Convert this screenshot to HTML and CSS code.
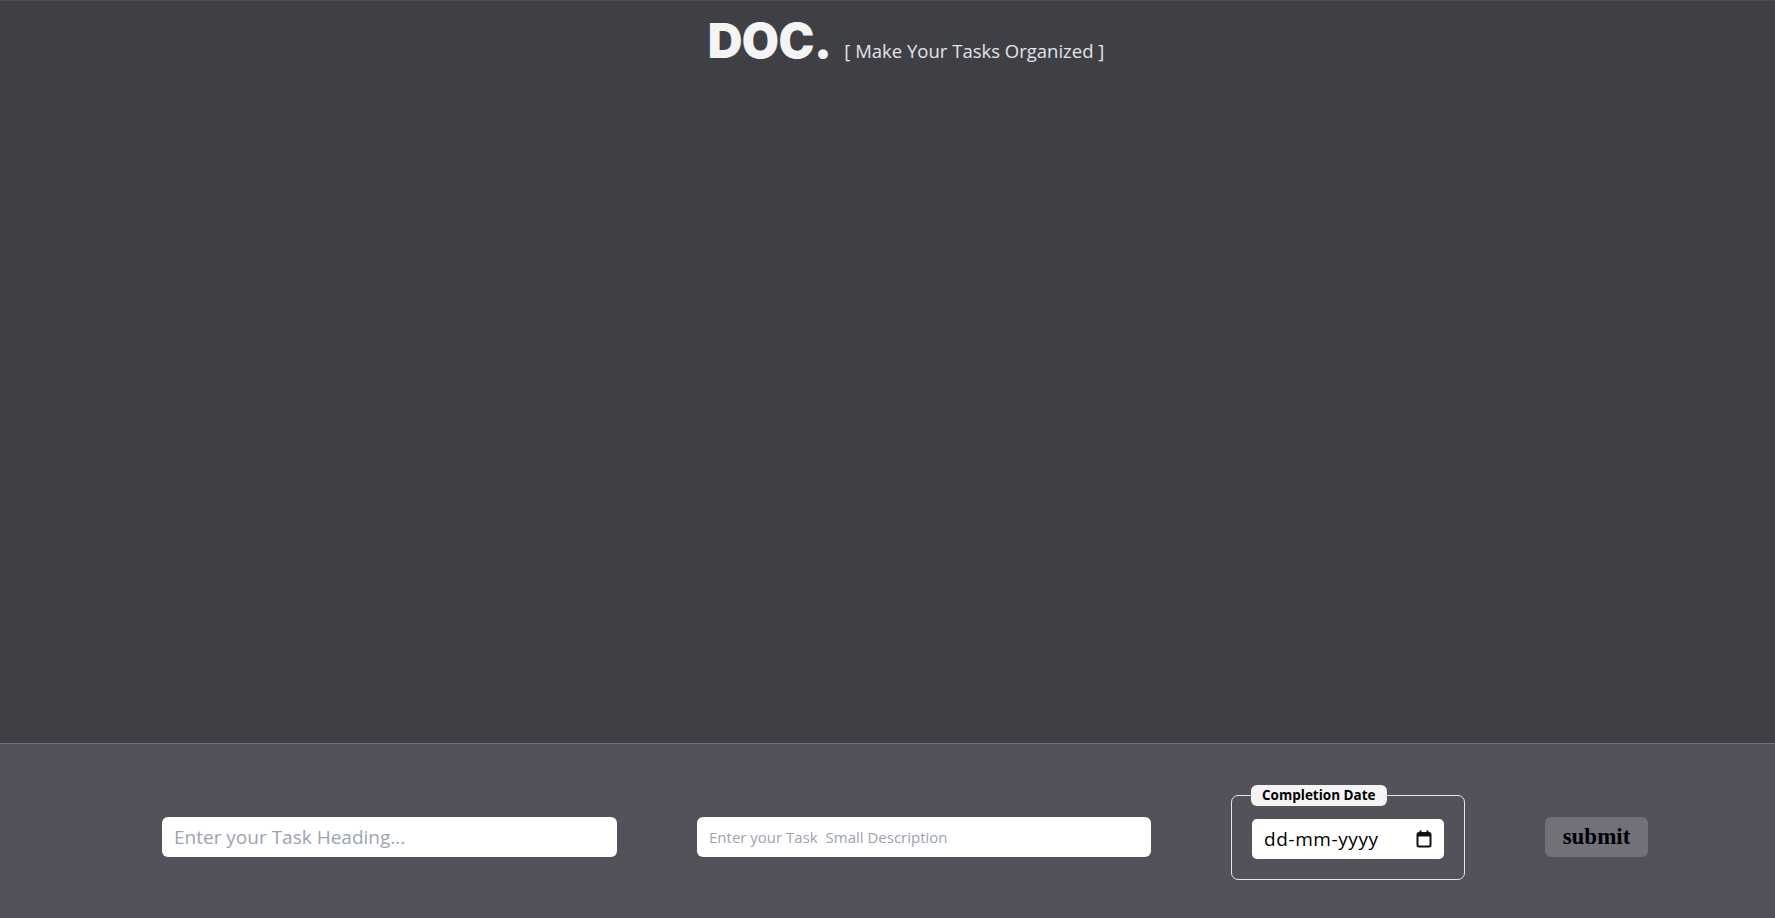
FILE: index.html
```html
<!DOCTYPE html>
<html>
<head>
<meta charset="utf-8">
<link rel="stylesheet" href="styles.css">
</head>
<body>
<div class="page">
  <header class="top">
    <div class="brand">
      <h1 class="logo">DOC.</h1>
      <span class="tagline">[ Make Your Tasks Organized ]</span>
    </div>
  </header>
  <form class="bar">
    <input class="field heading" type="text" placeholder="Enter your Task Heading...">
    <input class="field desc" type="text" placeholder="Enter your Task  Small Description">
    <fieldset class="dateset">
      <legend class="legend">Completion Date</legend>
      <div class="datebox">
        <span class="datetext">dd-mm-yyyy</span>
        <svg class="cal" width="16" height="18" viewBox="0 0 16 18"><rect x="1.5" y="3" width="13" height="13.5" rx="1.5" fill="none" stroke="#111" stroke-width="2"/><rect x="1.5" y="3" width="13" height="3.5" fill="#111"/><line x1="4.5" y1="0.5" x2="4.5" y2="4" stroke="#111" stroke-width="2"/><line x1="11.5" y1="0.5" x2="11.5" y2="4" stroke="#111" stroke-width="2"/></svg>
      </div>
    </fieldset>
    <button class="submit" type="button">submit</button>
  </form>
</div>
</body>
</html>
```

FILE: styles.css
```css
* { box-sizing: border-box; }
html, body { margin: 0; padding: 0; }
body { background: #3f3f46; font-family: "Open Sans", "Noto Sans", sans-serif; }
.page { display: flex; flex-direction: column; height: 100vh; }
.top { flex: 1; border-top: 1px solid #4a4a51; display: flex; justify-content: center; }
.brand { display: flex; align-items: baseline; gap: 13px; padding-top: 16px; padding-left: 37px; }
.logo { margin: 0; font-family: Inter, sans-serif; font-weight: 900; font-size: 48px; color: #f4f4f5; letter-spacing: -0.5px; line-height: 1; }
.tagline { color: #e4e4e7; font-size: 18.5px; }
.bar { height: 175px; background: #52525b; border-top: 1px solid #71717a; display: flex; align-items: center; gap: 80px; padding-left: 162px; padding-top: 12px; margin: 0; }
.field { height: 40px; width: 455px; border: none; border-radius: 6px; background: #fff; padding: 0 12px; outline: none; font-family: "Open Sans", sans-serif; }
.field::placeholder { color: #9ca3af; }
.heading { font-size: 19px; font-weight: 500; }
.desc { font-size: 15px; width: 454px; font-weight: 500; }
.dateset { margin: 0; width: 234px; height: 95px; border: 1px solid #e4e4e7; border-radius: 7px; padding: 13px 18px 0 20px; margin-top: -10px; }
.legend { background: #f4f4f5; color: #000; font-weight: 700; font-size: 13.5px; border-radius: 6px; padding: 1px 11px 2px; margin-left: -1px; line-height: 18px; }
.datebox { width: 192px; height: 40px; background: #fff; border-radius: 5px; display: flex; align-items: center; justify-content: space-between; padding: 0 12px 0 12px; }
.datetext { font-size: 19px; color: #000; letter-spacing: 0.6px; }
.cal { display: block; }
.submit { width: 103px; height: 40px; background: #71717a; border: none; border-radius: 6px; font-family: "Liberation Serif", serif; font-weight: 700; font-size: 23px; color: #000; padding: 0; }
```
